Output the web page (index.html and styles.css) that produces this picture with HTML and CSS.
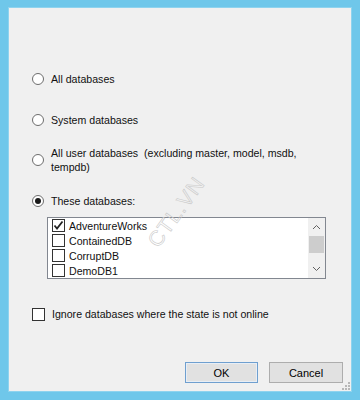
FILE: index.html
```html
<!DOCTYPE html>
<html>
<head>
<meta charset="utf-8">
<title>Select databases</title>
<link rel="stylesheet" href="styles.css">
</head>
<body>
<div class="window">
 <div class="opt first"><span class="radio"></span><span class="text">All databases</span></div>
 <div class="opt second"><span class="radio"></span><span class="text">System databases</span></div>
 <div class="opt third"><span class="radio"></span><span class="text">All user databases&nbsp; (excluding master, model, msdb,<br>tempdb)</span></div>
 <div class="opt fourth"><span class="radio on"></span><span class="text">These databases:</span></div>
 <div class="list">
  <ul class="items">
   <li><span class="check on"><svg width="11" height="11" viewBox="0 0 11 11"><polyline points="1.5,5.5 4,8.5 9.5,1.5" fill="none" stroke="#222" stroke-width="1.8"/></svg></span>AdventureWorks</li>
   <li><span class="check"></span>ContainedDB</li>
   <li><span class="check"></span>CorruptDB</li>
   <li><span class="check"></span>DemoDB1</li>
  </ul>
  <div class="scroll">
   <span class="arrow"><svg width="9" height="6" viewBox="0 0 9 6"><polyline points="1,5 4.5,1.5 8,5" fill="none" stroke="#606060" stroke-width="1"/></svg></span>
   <span class="thumb"></span>
   <span class="track"></span>
   <span class="arrow"><svg width="9" height="6" viewBox="0 0 9 6"><polyline points="1,1 4.5,4.5 8,1" fill="none" stroke="#606060" stroke-width="1"/></svg></span>
  </div>
 </div>
 <div class="opt ignore"><span class="check"></span><span class="text">Ignore databases where the state is not online</span></div>
 <div class="buttons">
  <button class="ok">OK</button>
  <button>Cancel</button>
 </div>
 <span class="grip"><svg width="9" height="9" viewBox="0 0 9 9" fill="#b8b8b8"><rect x="6" y="0" width="2" height="2"/><rect x="3" y="3" width="2" height="2"/><rect x="6" y="3" width="2" height="2"/><rect x="0" y="6" width="2" height="2"/><rect x="3" y="6" width="2" height="2"/><rect x="6" y="6" width="2" height="2"/></svg></span>
 <span class="mark">CTL.VN</span>
</div>
</body>
</html>
```

FILE: styles.css
```css
html, body {
 margin: 0;
 padding: 0;
}
body {
 font-family: 'Liberation Sans', Arial, sans-serif;
 font-size: 10.6px;
 color: #111;
}
.window {
 position: relative;
 box-sizing: border-box;
 width: 360px;
 height: 400px;
 background: #f0f0f0;
 border: 8px solid #6fc7ea;
 border-top-width: 7px;
 box-shadow: inset 0 0 0 1px #8fd3ee;
 display: flex;
 flex-direction: column;
 overflow: hidden;
}
.window::before {
 content: '';
 position: absolute;
 left: -8px;
 top: -7px;
 right: -8px;
 bottom: -8px;
 border: 1px solid #4aa9d3;
 pointer-events: none;
}
.opt {
 display: flex;
 align-items: center;
 margin-left: 24px;
 line-height: 14px;
}
.opt .text {
 margin-left: 7px;
}
.first { margin-top: 65px; }
.second { margin-top: 27px; }
.third { margin-top: 19px; }
.fourth { margin-top: 20px; }
.radio {
 box-sizing: border-box;
 width: 12px;
 height: 12px;
 border: 1px solid #6d6d6d;
 border-radius: 50%;
 background: #fff;
 flex: none;
 display: flex;
 align-items: center;
 justify-content: center;
}
.radio.on::after {
 content: '';
 width: 6px;
 height: 6px;
 border-radius: 50%;
 background: #1a1a1a;
}
.check {
 box-sizing: border-box;
 width: 13px;
 height: 13px;
 border: 1px solid #333;
 background: #fff;
 flex: none;
 display: flex;
 align-items: center;
 justify-content: center;
}
.list {
 box-sizing: border-box;
 margin: 9px 0 0 39px;
 width: 279px;
 height: 62px;
 border: 1px solid #828790;
 background: #fff;
 display: flex;
}
.items {
 list-style: none;
 margin: 0;
 padding: 0;
 flex: 1;
}
.items li {
 display: flex;
 align-items: center;
 height: 15px;
 padding-left: 4px;
}
.items .check {
 margin-right: 4px;
}
.scroll {
 width: 17px;
 background: #f0f0f0;
 display: flex;
 flex-direction: column;
}
.scroll .arrow {
 height: 18px;
 display: flex;
 align-items: center;
 justify-content: center;
 flex: none;
}
.scroll .thumb {
 height: 17px;
 margin: 0 1px;
 background: #cdcdcd;
 flex: none;
}
.scroll .track {
 flex: 1;
}
.ignore {
 margin-top: 28px;
 margin-left: 24px;
}
.buttons {
 display: flex;
 justify-content: flex-end;
 gap: 11px;
 margin-top: 41px;
 margin-right: 9px;
}
button {
 box-sizing: border-box;
 width: 74px;
 height: 21px;
 padding: 0;
 font-family: inherit;
 font-size: 11px;
 background: #e1e1e1;
 border: 1px solid #adadad;
 color: #000;
}
button.ok {
 width: 73px;
 border-color: #6f9fcf;
 box-shadow: inset 0 0 0 1px #e8eef5;
}
.grip {
 position: absolute;
 right: 1px;
 bottom: 1px;
 line-height: 0;
}
.mark {
 position: absolute;
 left: 128px;
 top: 193px;
 font-size: 21px;
 letter-spacing: 1px;
 color: transparent;
 -webkit-text-stroke: 0.6px #c9c9c9;
 transform: rotate(-54deg);
 pointer-events: none;
}
```
